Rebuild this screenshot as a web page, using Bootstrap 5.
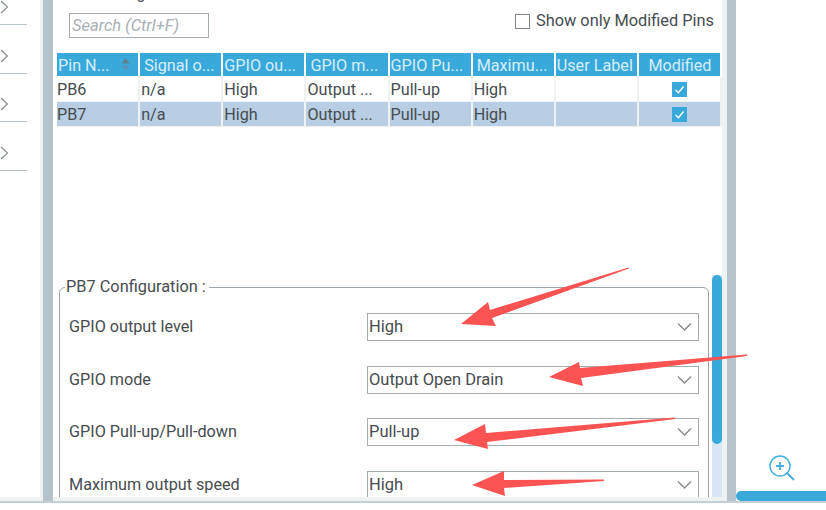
<!DOCTYPE html>
<html lang="en">
  <head>
    <meta charset="utf-8" />
    <meta name="viewport" content="width=device-width, initial-scale=1" />
    <title>Pin Configuration</title>
    <link href="https://cdn.jsdelivr.net/npm/bootstrap@5.3.3/dist/css/bootstrap.min.css" rel="stylesheet" />
    <style>
      html, body { height: 510px; overflow: hidden; background: #fff; }
      body { font-family: Roboto, "Liberation Sans", sans-serif; font-size: 16px; color: #474c50; position: relative; }
      .shell { height: 503px; border-bottom: 2px solid #c4cfd6; }
      .side-list { width: 40px; background: #fff; border-bottom: 4px solid #eff2f3; flex: none; }
      .side-row { width: 27px; height: 48.6px; border-bottom: 1px solid #b9c3ca; display: flex; align-items: flex-end; padding-bottom: 10px; }
      .side-row:first-child { height: 25px; }
      .side-row svg { display: block; }
      .split-bar { width: 13px; background: #b6c3cb; border-left: 3px solid #eff2f3; flex: none; }
      .main-pane { width: 669px; position: relative; overflow: hidden; border-bottom: 4px solid #eff2f3; flex: none; }
      .gutter-bar { width: 14px; flex: none; background: #b6c3cb; border-left: 5px solid #eff2f3; }
      .zoom-pane { flex: 1; position: relative; }
      .clipped-head { margin: -16px 0 0 17px; height: 20px; line-height: 20px; white-space: nowrap; }
      .top-tools { height: 49px; padding: 9px 8px 0 16px; }
      .search-box { width: 140px; height: 25px; border: 1px solid #a6adb1; font-style: italic; color: #a9afb3; padding: 0 2px; line-height: 23px; font-size: 16.5px; }
      .only-check { width: 15px; height: 15px; border: 1px solid #7f8589; margin-right: 6px; }
      .only-label { font-size: 16.35px; line-height: 16px; }
      .pin-grid { width: 665px; margin-left: 4px; border-collapse: separate; border-spacing: 0; table-layout: fixed; }
      .pin-grid th { height: 24px; background: #39a9dc; color: #d5eef9; font-weight: 400; padding: 2px 0 0 1px; border: 1px solid #fff; border-width: 0 2px 1px 0; white-space: nowrap; overflow: hidden; line-height: 21px; font-size: 16.2px; }
      .pin-grid td { height: 25px; padding: 0 1px; border-right: 2px solid #eff2f3; border-bottom: 1px solid #eff2f3; white-space: nowrap; line-height: 23px; background: #fff; font-size: 16.2px; color: #474c50; }
      .pin-grid td:first-child { padding-left: 0; }
      .pin-grid tr.picked td { background: #b8cee4; }
      .tick { width: 15px; height: 15px; background: #39a9dc; display: block; margin: 0 auto; }
      .config-box { position: absolute; left: 6px; top: 287px; width: 650px; height: 240px; border: 1px solid #9aa4aa; border-radius: 6px; padding: 25px 9px 0 9px; }
      .config-title { position: absolute; left: 5px; top: -11px; background: #fff; padding: 0 3px 0 1px; line-height: 20px; font-size: 16.35px; }
      .config-row { height: 52.6px; }
      .config-label { font-size: 16.2px; line-height: 28px; }
      .combo { width: 332px; height: 28px; border: 1px solid #a6adb1; padding: 0 1px; line-height: 26px; font-size: 16.5px; }
      .v-track { position: absolute; right: 0; top: 275px; width: 10px; height: 225px; background: #d8e6f3; }
      .v-thumb { height: 169px; background: #39a9dc; border-radius: 5px; }
      .zoom-bar { position: absolute; left: 0; right: 0; bottom: 0; height: 10px; background: #39a9dc; border-radius: 5px 0 0 5px; }
      .zoom-icon { position: absolute; left: 32px; top: 454px; }
      .arrows { position: absolute; left: 0; top: 0; pointer-events: none; }
    </style>
  </head>
  <body>
    <div class="shell d-flex">
      <div class="side-list">
        <div class="side-row"><svg width="9" height="14" viewBox="0 0 9 14"><path d="M1 1l6.5 6L1 13" fill="none" stroke="#8a9094" stroke-width="1.2"/></svg></div>
        <div class="side-row"><svg width="9" height="14" viewBox="0 0 9 14"><path d="M1 1l6.5 6L1 13" fill="none" stroke="#8a9094" stroke-width="1.2"/></svg></div>
        <div class="side-row"><svg width="9" height="14" viewBox="0 0 9 14"><path d="M1 1l6.5 6L1 13" fill="none" stroke="#8a9094" stroke-width="1.2"/></svg></div>
        <div class="side-row"><svg width="9" height="14" viewBox="0 0 9 14"><path d="M1 1l6.5 6L1 13" fill="none" stroke="#8a9094" stroke-width="1.2"/></svg></div>
      </div>
      <div class="split-bar"></div>
      <div class="main-pane">
        <div class="clipped-head">Search Signals</div>
        <div class="top-tools d-flex justify-content-between align-items-start">
          <div class="search-box">Search (Ctrl+F)</div>
          <div class="d-flex align-items-center">
            <span class="only-check"></span><span class="only-label">Show only Modified Pins</span>
          </div>
        </div>
        <table class="pin-grid">
          <thead>
            <tr>
              <th class="position-relative">Pin N...<svg class="position-absolute end-0 top-0 me-2 mt-1" width="9" height="15" viewBox="0 0 9 15"><path d="M4.5 1L8.5 6.5H.5z" fill="#5f7f92"/><path d="M4.5 14L8.5 8.5H.5z" fill="#5a93b5"/></svg></th>
              <th class="ps-1">Signal o...</th>
              <th>GPIO ou...</th>
              <th class="ps-1">GPIO m...</th>
              <th>GPIO Pu...</th>
              <th class="ps-1">Maximu...</th>
              <th>User Label</th>
              <th class="text-center">Modified</th>
            </tr>
          </thead>
          <tbody>
            <tr>
              <td>PB6</td><td>n/a</td><td>High</td><td>Output ...</td><td>Pull-up</td><td>High</td><td></td>
              <td><svg class="tick" viewBox="0 0 15 15"><path d="M3.5 8l3 2.8L11.5 4.5" fill="none" stroke="#fff" stroke-width="1.4"/></svg></td>
            </tr>
            <tr class="picked">
              <td>PB7</td><td>n/a</td><td>High</td><td>Output ...</td><td>Pull-up</td><td>High</td><td></td>
              <td><svg class="tick" viewBox="0 0 15 15"><path d="M3.5 8l3 2.8L11.5 4.5" fill="none" stroke="#fff" stroke-width="1.4"/></svg></td>
            </tr>
          </tbody>
        </table>
        <div class="config-box">
          <div class="config-title">PB7 Configuration :</div>
          <div class="config-row d-flex justify-content-between"><span class="config-label">GPIO output level</span><div class="combo d-flex justify-content-between">High<svg class="me-1 mt-2" width="17" height="10" viewBox="0 0 17 10"><path d="M2 1.5l6.5 6.5L15 1.5" fill="none" stroke="#85898c" stroke-width="1.3"/></svg></div></div>
          <div class="config-row d-flex justify-content-between"><span class="config-label">GPIO mode</span><div class="combo d-flex justify-content-between">Output Open Drain<svg class="me-1 mt-2" width="17" height="10" viewBox="0 0 17 10"><path d="M2 1.5l6.5 6.5L15 1.5" fill="none" stroke="#85898c" stroke-width="1.3"/></svg></div></div>
          <div class="config-row d-flex justify-content-between"><span class="config-label">GPIO Pull-up/Pull-down</span><div class="combo d-flex justify-content-between">Pull-up<svg class="me-1 mt-2" width="17" height="10" viewBox="0 0 17 10"><path d="M2 1.5l6.5 6.5L15 1.5" fill="none" stroke="#85898c" stroke-width="1.3"/></svg></div></div>
          <div class="config-row d-flex justify-content-between"><span class="config-label">Maximum output speed</span><div class="combo d-flex justify-content-between">High<svg class="me-1 mt-2" width="17" height="10" viewBox="0 0 17 10"><path d="M2 1.5l6.5 6.5L15 1.5" fill="none" stroke="#85898c" stroke-width="1.3"/></svg></div></div>
        </div>
        <div class="v-track"><div class="v-thumb"></div></div>
      </div>
      <div class="gutter-bar"></div>
      <div class="zoom-pane">
        <svg class="zoom-icon" width="28" height="28" viewBox="0 0 28 28"><circle cx="12" cy="12" r="10" fill="none" stroke="#45aede" stroke-width="1.5"/><path d="M12 8v8M8 12h8" stroke="#45aede" stroke-width="1.8"/><path d="M19 19l7 7" stroke="#45aede" stroke-width="1.8"/></svg>
        <div class="zoom-bar"></div>
      </div>
    </div>
    <svg class="arrows" width="826" height="510" viewBox="0 0 826 510">
      <path d="M629 268.5L628.5 267.5L490 310L488 302L461 324L496 326L492 318z" fill="#fb5252"/>
      <path d="M747 356L747 354.5L580 368L579 362L549 377L583 386L581 378z" fill="#fb5252"/>
      <path d="M675 419L675 417.5L486 433L485 424L454 440L488 449L487 442z" fill="#fb5252"/>
      <path d="M604 481L604 479.5L504 480L504 471L472 485L505 496L504 488z" fill="#fb5252"/>
    </svg>
  </body>
</html>
